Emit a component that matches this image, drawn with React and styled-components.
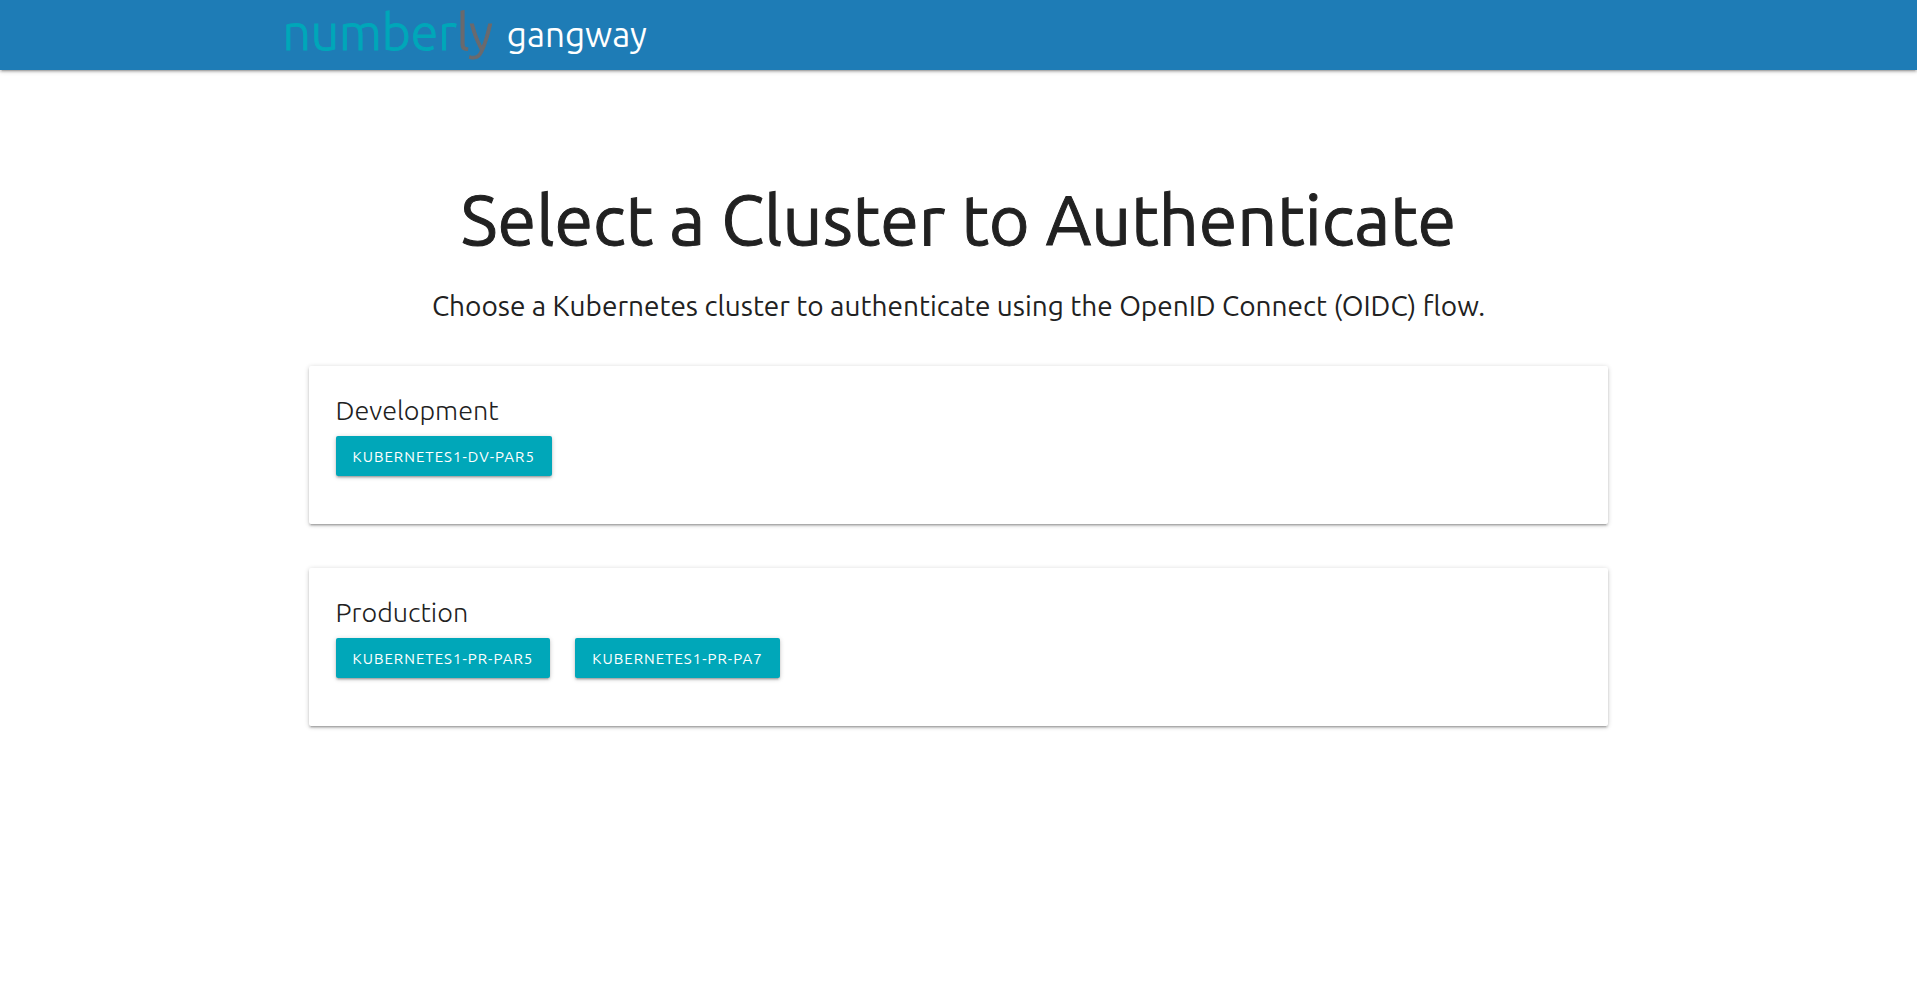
import React from "react";
import styled, { createGlobalStyle } from "styled-components";

const GlobalStyle = createGlobalStyle`
  *, *::before, *::after { box-sizing: border-box; }
  body {
    margin: 0;
    background: #fff;
    color: #212121;
    font-family: Ubuntu, "Noto Sans", "Open Sans", sans-serif;
  }
`;

const shadow =
  "0 2px 2px 0 rgba(0,0,0,.14), 0 3px 1px -2px rgba(0,0,0,.12), 0 1px 5px 0 rgba(0,0,0,.2)";

const Header = styled.header`
  background: #1e7cb6;
  box-shadow: ${shadow};
`;

const Container = styled.div`
  width: 70%;
  margin: 0 auto;
`;

const Brand = styled(Container)`
  display: flex;
  align-items: center;
  height: 70px;
  gap: 14px;
`;

const Logo = styled.a`
  margin-left: -5px;
  padding-bottom: 8px;
  color: #00a7b9;
  font-size: 50px;
  font-weight: 300;
  line-height: 62px;
  -webkit-text-stroke: 1px currentColor;
  text-decoration: none;
`;

const LogoTail = styled.span`
  color: #6a6a6e;
`;

const ProductName = styled.span`
  padding-bottom: 2px;
  color: #fff;
  font-size: 35px;
  font-weight: 400;
  line-height: 68px;
`;

const Main = styled(Container).attrs({ as: "main" })`
  padding: 105px 21px 40px;
`;

const Title = styled.h1`
  margin: 0;
  font-size: 70px;
  font-weight: 400;
  line-height: 88px;
  text-align: center;
  -webkit-text-stroke: 1px currentColor;
`;

const Subtitle = styled.p`
  margin: 25px 0 42px;
  font-size: 28px;
  line-height: 36px;
  text-align: center;
`;

const Card = styled.section`
  margin-bottom: 44px;
  padding: 27px 27px 48px;
  background: #fff;
  border-radius: 2px;
  box-shadow: ${shadow};
`;

const CardTitle = styled.h2`
  margin: 0 0 8px;
  font-size: 27px;
  font-weight: 300;
  line-height: 35px;
`;

const Clusters = styled.div`
  display: flex;
  flex-wrap: wrap;
  gap: 25px;
`;

const ClusterButton = styled.button`
  height: 40px;
  padding: 0 17px;
  border: 0;
  border-radius: 2px;
  background: #00a7b9;
  box-shadow: ${shadow};
  color: #fff;
  font: inherit;
  font-size: 15px;
  letter-spacing: 1px;
  text-transform: uppercase;
  cursor: pointer;
`;

const environments = [
  { name: "Development", clusters: ["kubernetes1-dv-par5"] },
  { name: "Production", clusters: ["kubernetes1-pr-par5", "kubernetes1-pr-pa7"] },
];

export default function App() {
  return (
    <>
      <GlobalStyle />
      <Header>
        <Brand>
          <Logo href="#">
            number<LogoTail>ly</LogoTail>
          </Logo>
          <ProductName>gangway</ProductName>
        </Brand>
      </Header>
      <Main>
        <Title>Select a Cluster to Authenticate</Title>
        <Subtitle>
          Choose a Kubernetes cluster to authenticate using the OpenID Connect (OIDC) flow.
        </Subtitle>
        {environments.map((env) => (
          <Card key={env.name}>
            <CardTitle>{env.name}</CardTitle>
            <Clusters>
              {env.clusters.map((cluster) => (
                <ClusterButton key={cluster} type="button">
                  {cluster}
                </ClusterButton>
              ))}
            </Clusters>
          </Card>
        ))}
      </Main>
    </>
  );
}
